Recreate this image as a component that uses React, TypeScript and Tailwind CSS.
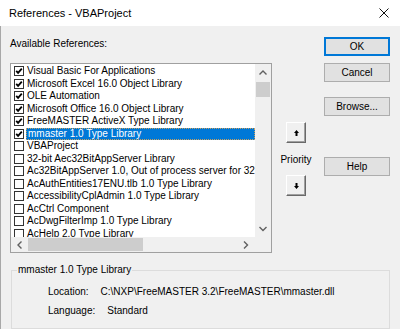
import React from "react";

type Ref = { name: string; checked: boolean; selected?: boolean };

const refs: Ref[] = [
  { name: "Visual Basic For Applications", checked: true },
  { name: "Microsoft Excel 16.0 Object Library", checked: true },
  { name: "OLE Automation", checked: true },
  { name: "Microsoft Office 16.0 Object Library", checked: true },
  { name: "FreeMASTER ActiveX Type Library", checked: true },
  { name: "mmaster 1.0 Type Library", checked: true, selected: true },
  { name: "VBAProject", checked: false },
  { name: "32-bit Aec32BitAppServer Library", checked: false },
  { name: "Ac32BitAppServer 1.0, Out of process server for 32 bit", checked: false },
  { name: "AcAuthEntities17ENU.tlb 1.0 Type Library", checked: false },
  { name: "AccessibilityCplAdmin 1.0 Type Library", checked: false },
  { name: "AcCtrl Component", checked: false },
  { name: "AcDwgFilterImp 1.0 Type Library", checked: false },
  { name: "AcHelp 2.0 Type Library", checked: false },
];

function CheckBox({ checked }: { checked: boolean }) {
  return (
    <div className="ml-[3px] flex h-[10px] w-[10px] shrink-0 items-center justify-center border border-[#333] bg-white">
      {checked && (
        <svg width="8" height="8" viewBox="0 0 8 8">
          <path d="M1.2 3.8 L3.1 5.9 L6.8 1.6" fill="none" stroke="#000" strokeWidth="1.8" />
        </svg>
      )}
    </div>
  );
}

function Chevron({ dir }: { dir: "up" | "down" | "left" | "right" }) {
  const d = {
    up: "M0.5 4.5 L4 1 L7.5 4.5",
    down: "M0.5 1 L4 4.5 L7.5 1",
    left: "M4.5 0.5 L1 4 L4.5 7.5",
    right: "M1 0.5 L4.5 4 L1 7.5",
  }[dir];
  const vertical = dir === "up" || dir === "down";
  return (
    <svg width={vertical ? 8 : 6} height={vertical ? 6 : 8} viewBox={vertical ? "0 0 8 6" : "0 0 6 8"}>
      <path d={d} fill="none" stroke="#606060" strokeWidth="1.4" />
    </svg>
  );
}

function WinButton({ label, isDefault }: { label: string; isDefault?: boolean }) {
  return (
    <div
      className={
        isDefault
          ? "flex h-[19px] items-center justify-center border-2 border-[#0078d7] bg-[#e1e1e1]"
          : "flex h-[19px] items-center justify-center border border-[#adadad] bg-[#e1e1e1]"
      }
    >
      {label}
    </div>
  );
}

function PriorityButton({ up }: { up: boolean }) {
  return (
    <div className="flex h-[21px] w-[20px] items-center justify-center border-t border-l border-t-white border-l-white border-r border-b border-r-[#696969] border-b-[#696969] bg-[#f0f0f0] shadow-[inset_-1px_-1px_0_#a0a0a0]">
      <svg width="5" height="6" viewBox="0 0 5 6" className={up ? "" : "rotate-180"}>
        <polygon points="2.5,0 5,3 3.5,3 3.5,6 1.5,6 1.5,3 0,3" fill="#000" />
      </svg>
    </div>
  );
}

export default function App() {
  return (
    <div className="h-[329px] w-[400px] overflow-hidden bg-[#f0f0f0] text-[10px] leading-[12px] text-black [font-family:'Liberation_Sans',Arial,sans-serif]">
      <div className="flex h-[26px] items-center justify-between bg-white pl-[9px] pr-[11px]">
        <span className="text-[11px]">References - VBAProject</span>
        <svg width="10" height="10" viewBox="0 0 10 10">
          <path d="M0.5 0.5 L9.5 9.5 M9.5 0.5 L0.5 9.5" stroke="#111" strokeWidth="1" />
        </svg>
      </div>

      <div className="flex h-[303px] flex-col border-l border-[#a8a8a8] pl-[9px]">
        <div className="flex">
          <div className="flex w-[262px] flex-col pt-[12px]">
            <div className="h-[12px]">Available References:</div>
            <div className="mt-[13px] flex h-[190px] flex-col border border-[#a0a0a0] bg-white">
              <div className="flex h-[173px]">
                <div className="w-[244px] overflow-hidden pt-[1px]">
                  {refs.map((r) => (
                    <div key={r.name} className="flex h-[12.5px] items-center whitespace-nowrap">
                      <CheckBox checked={r.checked} />
                      <span
                        className={
                          r.selected
                            ? "ml-[2px] flex-1 border border-dotted border-[#c8a060] bg-[#0078d7] pl-[1px] leading-[10px] text-white"
                            : "ml-[3px] flex-1"
                        }
                      >
                        {r.name}
                      </span>
                    </div>
                  ))}
                </div>
                <div className="flex w-[16px] flex-col bg-[#f0f0f0]">
                  <div className="flex h-[17px] items-center justify-center">
                    <Chevron dir="up" />
                  </div>
                  <div className="mx-[1px] mt-[1px] h-[15px] bg-[#cdcdcd]" />
                  <div className="flex-1" />
                  <div className="flex h-[17px] items-center justify-center">
                    <Chevron dir="down" />
                  </div>
                </div>
              </div>
              <div className="flex h-[15px] bg-[#f0f0f0]">
                <div className="flex w-[17px] items-center justify-center">
                  <Chevron dir="left" />
                </div>
                <div className="my-[1px] w-[115px] bg-[#cdcdcd]" />
                <div className="flex-1" />
                <div className="flex w-[17px] items-center justify-center">
                  <Chevron dir="right" />
                </div>
                <div className="w-[17px]" />
              </div>
            </div>
          </div>

          <div className="ml-[8px] flex w-[32px] flex-col items-center pt-[96px]">
            <PriorityButton up />
            <div className="mt-[11px] h-[12px]">Priority</div>
            <div className="mt-[9px]">
              <PriorityButton up={false} />
            </div>
          </div>

          <div className="ml-[12px] flex w-[66px] flex-col pt-[11px]">
            <WinButton label="OK" isDefault />
            <div className="mt-[7px]">
              <WinButton label="Cancel" />
            </div>
            <div className="mt-[15px]">
              <WinButton label="Browse..." />
            </div>
            <div className="mt-[41px]">
              <WinButton label="Help" />
            </div>
          </div>
        </div>

        <fieldset className="ml-[1px] mt-[10px] w-[379px] flex-1 border border-[#dcdcdc] px-0">
          <legend className="ml-[5px] px-[1px] leading-[14px]">mmaster 1.0 Type Library</legend>
          <div className="flex flex-col pl-[36px] pt-[9px]">
            <div className="flex h-[12px] gap-[12px]">
              <span>Location:</span>
              <span>C:\NXP\FreeMASTER 3.2\FreeMASTER\mmaster.dll</span>
            </div>
            <div className="mt-[7px] flex h-[12px] gap-[12px]">
              <span>Language:</span>
              <span>Standard</span>
            </div>
          </div>
        </fieldset>
      </div>
    </div>
  );
}
